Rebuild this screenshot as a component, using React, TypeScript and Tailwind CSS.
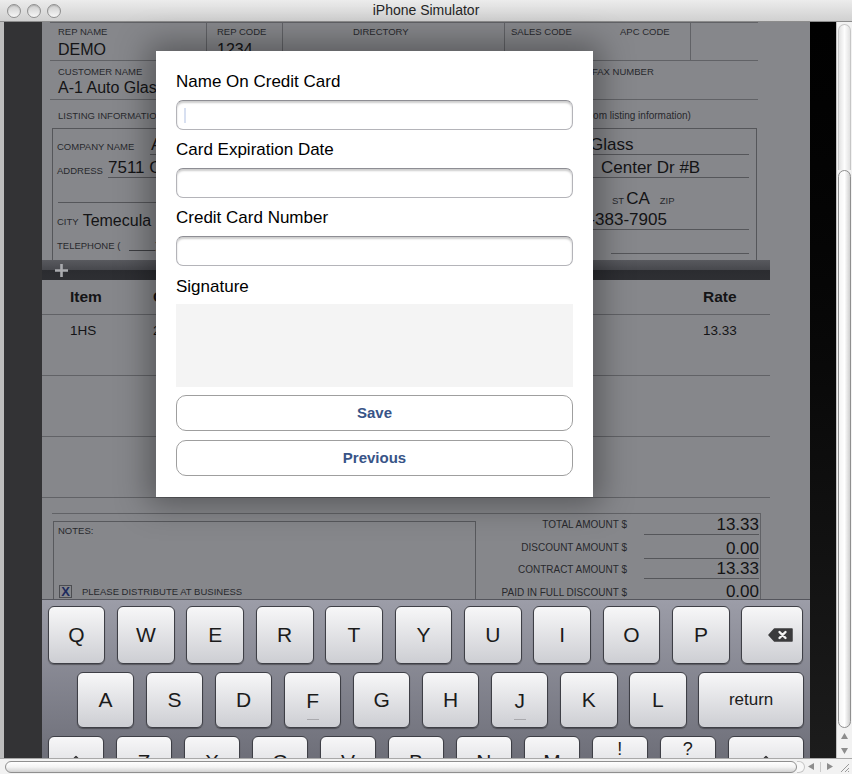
import React from "react";

const line = "border-[#616266]";

function Label({ children, className = "" }: { children: React.ReactNode; className?: string }) {
  return (
    <div className={`text-[9.5px] leading-[10px] text-[#28292d] whitespace-nowrap ${className}`}>{children}</div>
  );
}

function TitleBar() {
  return (
    <div className="h-[22px] shrink-0 flex items-center bg-gradient-to-b from-[#ececec] to-[#d0d0d0] border-b border-[#8c8c8c]">
      <div className="w-[90px] flex gap-[6px] pl-[7px]">
        {[0, 1, 2].map((i) => (
          <span
            key={i}
            className="w-[14px] h-[14px] rounded-full border border-[#8f8f8f] bg-gradient-to-b from-[#cdcdcd] to-[#f6f6f6] shadow-[inset_0_1px_1px_rgba(0,0,0,0.15)]"
          />
        ))}
      </div>
      <div className="flex-1 text-center text-[14px] text-[#262626]">iPhone Simulator</div>
      <div className="w-[90px]" />
    </div>
  );
}

function Form() {
  return (
    <div className="w-[728px] text-[#141416]">
      <div className={`ml-[8px] w-[708px] border-t ${line}`}>
        {/* rep row */}
        <div className={`flex h-[38px] border-b ${line}`}>
          <div className="w-[156px] shrink-0 pl-[8px] pt-[4px]">
            <Label>REP NAME</Label>
            <div className="mt-[4px] text-[16px] leading-[18px]">DEMO</div>
          </div>
          <div className={`w-[76px] shrink-0 border-l ${line} pl-[10px] pt-[4px]`}>
            <Label>REP CODE</Label>
            <div className="mt-[4px] text-[16px] leading-[18px]">1234</div>
          </div>
          <div className={`w-[222px] shrink-0 border-l ${line} pl-[70px] pt-[4px]`}>
            <Label>DIRECTORY</Label>
          </div>
          <div className={`w-[186px] shrink-0 border-l ${line} flex pt-[4px]`}>
            <Label className="w-[115px] pl-[6px]">SALES CODE</Label>
            <Label>APC CODE</Label>
          </div>
          <div className={`flex-1 border-l ${line}`} />
        </div>
        {/* customer row */}
        <div className={`flex h-[39px] border-b ${line}`}>
          <div className="w-[534px] shrink-0 pl-[8px] pt-[6px]">
            <Label>CUSTOMER NAME</Label>
            <div className="mt-[2px] text-[16px] leading-[18px]">A-1 Auto Glass</div>
          </div>
          <div className="pl-[8px] pt-[6px]">
            <Label>FAX NUMBER</Label>
          </div>
        </div>
        <div className="h-[28px] flex pl-[8px] pt-[11px]">
          <Label className="w-[529px]">LISTING INFORMATION</Label>
          <div className="text-[10px] leading-[10px] text-[#28292d] whitespace-nowrap">from listing information)</div>
        </div>
        {/* listing box */}
        <div className="ml-[2px] w-[705px] h-[132px] border-x border-t border-[#55565a]">
          <div className="flex items-end h-[26px]">
            <Label className="w-[97px] shrink-0 pl-[4px] mb-[3px]">COMPANY NAME</Label>
            <div className="flex-1 mr-[7px] h-full border-b border-[#55565a] flex items-end text-[17px] leading-[18px] whitespace-nowrap">
              <span className="w-[440px] shrink-0 pl-[1px]">A-1 Auto</span>
              <span>Glass</span>
            </div>
          </div>
          <div className="flex items-end h-[23px]">
            <Label className="w-[55px] shrink-0 pl-[4px] mb-[2px]">ADDRESS</Label>
            <div className="flex-1 mr-[7px] h-full border-b border-[#55565a] flex items-end text-[17px] leading-[18px] whitespace-nowrap">
              <span className="w-[493px] shrink-0">7511 Commerce</span>
              <span>Center Dr #B</span>
            </div>
          </div>
          <div className="flex items-end h-[25px]">
            <div className="ml-[5px] w-[527px] h-full border-b border-[#55565a]" />
            <div className="ml-[27px] mb-[-5px] flex items-baseline">
              <Label>ST</Label>
              <span className="ml-[2px] text-[17px] leading-[18px]">CA</span>
              <Label className="ml-[10px]">ZIP</Label>
            </div>
          </div>
          <div className="flex items-end h-[27px]">
            <div className="w-[507px] shrink-0 flex items-end pl-[4px]">
              <Label className="mb-[3px]">CITY</Label>
              <span className="ml-[4px] text-[16px] leading-[18px]">Temecula</span>
            </div>
            <div className="w-[189px] h-full border-b border-[#55565a] flex items-end text-[17px] leading-[18px] pl-[1px]">
              951-383-7905
            </div>
          </div>
          <div className="flex items-start h-[30px]">
            <div className="pt-[11px] pl-[4px] flex items-end">
              <Label>TELEPHONE (</Label>
              <span className="ml-[9px] w-[26px] h-[9px] border-b border-[#3d3e42]" />
              <Label>)</Label>
            </div>
            <div className="ml-auto mr-[7px] w-[138px] h-[24px] border-b border-[#55565a]" />
          </div>
        </div>
      </div>

      {/* toolbar */}
      <div className="h-[20px] flex items-center bg-[linear-gradient(#58595e,#47484d_50%,#2b2c30_50%,#2e2f33)]">
        <svg className="ml-[12px]" width="15" height="15" viewBox="0 0 15 15">
          <path d="M7.5 1v13M1 7.5h13" stroke="#a9aaae" strokeWidth="2.6" />
        </svg>
      </div>

      {/* line items */}
      <div className={`flex items-center h-[35px] border-b ${line} pl-[28px] text-[15.5px] font-bold`}>
        <div className="w-[83px]">Item</div>
        <div className="w-[550px]">Code</div>
        <div>Rate</div>
      </div>
      <div className={`flex h-[61px] border-b ${line} pl-[28px] pt-[8px] text-[13.5px] leading-[16px]`}>
        <div className="w-[83px]">1HS</div>
        <div className="w-[550px]">2</div>
        <div>13.33</div>
      </div>
      <div className={`h-[61px] border-b ${line}`} />
      <div className={`h-[61px] border-b ${line}`} />
      <div className="h-[15px]" />

      {/* notes and totals */}
      <div className={`ml-[10px] w-[709px] border-t border-r ${line} flex`}>
        <div className="ml-[1px] mt-[7px] w-[423px] h-[100px] shrink-0 border border-[#58595d]">
          <Label className="pl-[4px] pt-[4px]">NOTES:</Label>
          <div className="mt-[49px] ml-[5px] flex items-center">
            <span className="w-[13px] h-[13px] border border-[#4c4d51] flex items-center justify-center text-[13px] font-bold leading-none text-[#1d2b5e]">
              X
            </span>
            <Label className="ml-[10px]">PLEASE DISTRIBUTE AT BUSINESS</Label>
          </div>
        </div>
        <div className="flex-1 flex flex-col">
          {[
            { l: "TOTAL AMOUNT $", v: "13.33", h: "h-[21px]", mb: "mb-[5px]", b: true },
            { l: "DISCOUNT AMOUNT $", v: "0.00", h: "h-[24px]", mb: "mb-[6px]", b: true },
            { l: "CONTRACT AMOUNT $", v: "13.33", h: "h-[20px]", mb: "mb-[4px]", b: true },
            { l: "PAID IN FULL DISCOUNT $", v: "0.00", h: "h-[22px]", mb: "mb-[3px]", b: false },
          ].map((r) => (
            <div key={r.l} className={`flex items-end ${r.h}`}>
              <Label className={`w-[151px] text-right text-[10px] ${r.mb}`}>{r.l}</Label>
              <div
                className={`ml-[17px] w-[115px] h-full flex items-end justify-end text-[17px] leading-[18px] ${
                  r.b ? "border-b border-[#55565a]" : ""
                }`}
              >
                {r.v}
              </div>
            </div>
          ))}
        </div>
      </div>
    </div>
  );
}

function Key({ w, h = "h-full", children, className = "" }: { w: string; h?: string; children?: React.ReactNode; className?: string }) {
  return (
    <div
      className={`shrink-0 rounded-[6px] border border-[#3e3f46] bg-gradient-to-b from-[#f7f7f8] to-[#cdced3] shadow-[0_1px_1px_rgba(0,0,0,0.35)] flex text-[#1b1b1b] ${w} ${h} ${className}`}
    >
      {children}
    </div>
  );
}

function Letter({ k, w }: { k: string; w: string }) {
  return (
    <Key w={w} className="items-center justify-center text-[21px]">
      {k}
    </Key>
  );
}

function Homing({ k }: { k: string }) {
  return (
    <Key w="w-[57.6px]" className="flex-col items-center pt-[16px]">
      <span className="h-[24px] leading-[24px] text-[21px]">{k}</span>
      <span className="mt-[6px] w-[12px] h-[1.5px] bg-[#a9a9ad]" />
    </Key>
  );
}

function ShiftIcon() {
  return (
    <svg width="20" height="19" viewBox="0 0 20 19">
      <path d="M10 1.5 18.5 10H14v7.5H6V10H1.5Z" fill="none" stroke="#2c2c2c" strokeWidth="1.4" strokeLinejoin="round" />
    </svg>
  );
}

function Keyboard() {
  return (
    <div className="h-[159px] shrink-0 overflow-hidden border-t border-[#54555c] bg-gradient-to-b from-[#9c9da8] to-[#6e6f79] pt-[6px]">
      <div className="flex gap-[11.7px] pl-[5.7px] h-[57.6px]">
        {"QWERTYUIOP".split("").map((k) => (
          <Letter key={k} k={k} w="w-[57.7px]" />
        ))}
        <Key w="w-[61.3px]" className="items-center justify-end pr-[9px]">
          <svg width="25" height="14" viewBox="0 0 25 14">
            <path d="M1 7 6.5 1H24v12H6.5Z" fill="#3b3b3d" stroke="#3b3b3d" strokeWidth="1.5" strokeLinejoin="round" />
            <path d="M11.5 4 17.5 10M17.5 4 11.5 10" stroke="#f2f2f2" strokeWidth="2.4" strokeLinecap="round" />
          </svg>
        </Key>
      </div>
      <div className="mt-[8.4px] flex gap-[11.45px] pl-[34.7px] h-[55.6px]">
        {"ASDFGHJKL".split("").map((k) =>
          k === "F" || k === "J" ? <Homing key={k} k={k} /> : <Letter key={k} k={k} w="w-[57.6px]" />
        )}
        <Key w="w-[106.3px]" className="items-center justify-center text-[17px]">
          return
        </Key>
      </div>
      <div className="mt-[8.4px] flex gap-[11.4px] pl-[5.7px] h-[57px]">
        <Key w="w-[56.6px]" className="items-center justify-center">
          <ShiftIcon />
        </Key>
        {"ZXCVBNM".split("").map((k) => (
          <Key key={k} w="w-[56.6px]" className="justify-center pt-[13px] text-[21px] leading-[24px]">
            {k}
          </Key>
        ))}
        <Key w="w-[56.6px]" className="flex-col items-center pt-[2px] text-[18px] leading-[21px]">
          <span>!</span>
          <span>,</span>
        </Key>
        <Key w="w-[56.6px]" className="flex-col items-center pt-[2px] text-[18px] leading-[21px]">
          <span>?</span>
          <span>.</span>
        </Key>
        <Key w="w-[76.3px]" className="items-center justify-center">
          <ShiftIcon />
        </Key>
      </div>
    </div>
  );
}

function Field({ caret = false }: { caret?: boolean }) {
  return (
    <div className="mt-[8px] h-[30px] rounded-[7px] border border-[#b4b4b9] border-t-[#8e8e94] bg-white shadow-[inset_0_2px_2px_rgba(0,0,0,0.2)] flex items-center">
      {caret && <span className="ml-[7px] w-[2px] h-[15px] bg-[#d8e0f1]" />}
    </div>
  );
}

function Modal() {
  const lbl = "h-[20px] leading-[20px] text-[17px] text-black";
  const btn =
    "h-[36px] rounded-[10px] border border-[#9f9f9f] bg-white flex items-center justify-center text-[15px] font-bold text-[#385487]";
  return (
    <div className="absolute left-[114px] top-[29px] w-[437px] h-[446px] bg-white shadow-[0_0_30px_8px_rgba(0,0,0,0.35)] px-[20px] pt-[21px]">
      <div className={lbl}>Name On Credit Card</div>
      <Field caret />
      <div className={`mt-[10px] ${lbl}`}>Card Expiration Date</div>
      <Field />
      <div className={`mt-[10px] ${lbl}`}>Credit Card Number</div>
      <Field />
      <div className={`mt-[11px] ${lbl}`}>Signature</div>
      <div className="mt-[7px] h-[83px] bg-[#f4f4f4]" />
      <div className={`mt-[8px] ${btn}`}>Save</div>
      <div className={`mt-[9px] ${btn}`}>Previous</div>
    </div>
  );
}

function Tri({ dir }: { dir: "up" | "down" | "left" | "right" }) {
  const d = {
    up: "M3.5 0 7 6H0Z",
    down: "M0 0H7L3.5 6Z",
    left: "M0 3.5 6 0V7Z",
    right: "M0 0 6 3.5 0 7Z",
  }[dir];
  const vertical = dir === "up" || dir === "down";
  return (
    <svg width={vertical ? 7 : 6} height={vertical ? 6 : 7} viewBox={vertical ? "0 0 7 6" : "0 0 6 7"}>
      <path d={d} fill="#8d8d8d" />
    </svg>
  );
}

function VScroll() {
  return (
    <div className="w-[16px] flex flex-col bg-[#f2f2f2] border-l border-[#c2c2c2]">
      <div className="mx-[1px] mt-[2px] h-[146px] rounded-t-[7px] border border-b-0 border-[#c6c6c6] bg-gradient-to-r from-[#e2e2e2] via-[#fdfdfd] to-[#e2e2e2]" />
      <div className="mx-[1px] h-[558px] rounded-[7px] border border-[#8f8f8f] bg-gradient-to-r from-[#f4f4f4] via-white to-[#cfcfcf]" />
      <div className="flex-1 flex flex-col items-center justify-center gap-[9px]">
        <Tri dir="up" />
        <Tri dir="down" />
      </div>
    </div>
  );
}

function HScroll() {
  return (
    <div className="h-[16px] shrink-0 flex items-center bg-[#f2f2f2] border-t border-[#a9a9a9]">
      <div className="ml-[5px] w-[792px] h-[12px] rounded-full border border-[#8f8f8f] bg-gradient-to-b from-white via-[#f4f4f4] to-[#d2d2d2]" />
      <div className="w-[8px] h-[12px] rounded-r-full border border-l-0 border-[#c6c6c6] bg-[#f8f8f8]" />
      <div className="w-[31px] flex items-center justify-center gap-[6px]">
        <Tri dir="left" />
        <span className="w-[1px] h-[10px] bg-[#c9c9c9]" />
        <Tri dir="right" />
      </div>
      <div className="w-[16px] h-full flex items-center justify-center">
        <svg width="12" height="12" viewBox="0 0 12 12">
          <path d="M11 3 3 11M11 7 7 11M11 10 10 11" stroke="#9a9a9a" strokeWidth="1" />
        </svg>
      </div>
    </div>
  );
}

export default function App() {
  return (
    <div className="w-[852px] h-[774px] flex flex-col overflow-hidden bg-[#c4c4c4] font-['Liberation_Sans',Arial,sans-serif]">
      <TitleBar />
      <div className="flex h-[736px] shrink-0">
        <div className="w-[4px] bg-[#bdbdbd]" />
        <div className="w-[38px] bg-[#333335]" />
        <div className="relative w-[768px] flex flex-col bg-[#86878b]">
          <div className="h-[577px] shrink-0 overflow-hidden">
            <Form />
          </div>
          <Keyboard />
          <Modal />
        </div>
        <div className="w-[26px] bg-gradient-to-b from-[#010101] via-[#0a0a0a] to-[#1c1c1c]" />
        <VScroll />
      </div>
      <HScroll />
    </div>
  );
}
